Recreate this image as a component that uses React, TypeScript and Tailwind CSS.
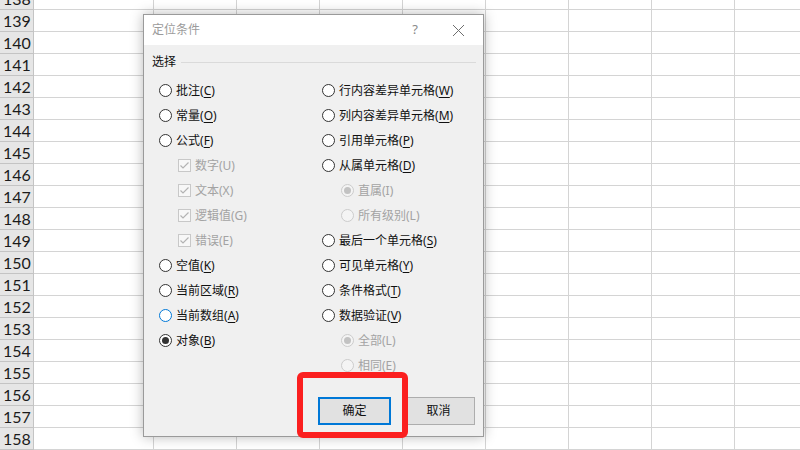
import React from "react";

type Item = {
  label: string;
  key?: string;
  kind: "radio" | "check" | "sub";
  checked?: boolean;
  disabled?: boolean;
  focus?: boolean;
};

const rows = Array.from({ length: 21 }, (_, i) => 138 + i);

const leftItems: Item[] = [
  { label: "批注", key: "C", kind: "radio" },
  { label: "常量", key: "O", kind: "radio" },
  { label: "公式", key: "F", kind: "radio" },
  { label: "数字(U)", kind: "check", checked: true, disabled: true },
  { label: "文本(X)", kind: "check", checked: true, disabled: true },
  { label: "逻辑值(G)", kind: "check", checked: true, disabled: true },
  { label: "错误(E)", kind: "check", checked: true, disabled: true },
  { label: "空值", key: "K", kind: "radio" },
  { label: "当前区域", key: "R", kind: "radio" },
  { label: "当前数组", key: "A", kind: "radio", focus: true },
  { label: "对象", key: "B", kind: "radio", checked: true },
];

const rightItems: Item[] = [
  { label: "行内容差异单元格", key: "W", kind: "radio" },
  { label: "列内容差异单元格", key: "M", kind: "radio" },
  { label: "引用单元格", key: "P", kind: "radio" },
  { label: "从属单元格", key: "D", kind: "radio" },
  { label: "直属(I)", kind: "sub", checked: true, disabled: true },
  { label: "所有级别(L)", kind: "sub", disabled: true },
  { label: "最后一个单元格", key: "S", kind: "radio" },
  { label: "可见单元格", key: "Y", kind: "radio" },
  { label: "条件格式", key: "T", kind: "radio" },
  { label: "数据验证", key: "V", kind: "radio" },
  { label: "全部(L)", kind: "sub", checked: true, disabled: true },
  { label: "相同(E)", kind: "sub", disabled: true },
];

function Radio({ checked, disabled, focus }: { checked?: boolean; disabled?: boolean; focus?: boolean }) {
  const border = disabled ? "border-[#cccccc] bg-[#f4f4f4]" : focus ? "border-[#0078d7] bg-white" : "border-[#333333] bg-white";
  return (
    <div className={`flex h-[13px] w-[13px] shrink-0 items-center justify-center rounded-full border ${border}`}>
      {checked && (
        <div className={`h-[7px] w-[7px] rounded-full ${disabled ? "bg-[#c2c2c2]" : "bg-[#333333]"}`} />
      )}
    </div>
  );
}

function Check() {
  return (
    <div className="flex h-[13px] w-[13px] shrink-0 items-center justify-center border border-[#c8c8c8] bg-[#f7f7f7]">
      <svg width="11" height="11" viewBox="0 0 11 11">
        <polyline points="1.5,5.5 4,8 9.5,2.5" fill="none" stroke="#b3b3b3" strokeWidth="1.2" />
      </svg>
    </div>
  );
}

function Option({ item }: { item: Item }) {
  const text = item.disabled ? "text-[#a3a3a3]" : "text-[#111111]";
  return (
    <div className={`flex h-[25px] items-center ${item.kind === "radio" ? "" : "pl-[19px]"}`}>
      {item.kind === "check" ? (
        <Check />
      ) : (
        <Radio checked={item.checked} disabled={item.disabled} focus={item.focus} />
      )}
      <span className={`ml-[4px] whitespace-nowrap text-[12px] leading-none ${text}`}>
        {item.label}
        {item.key && (
          <>
            (<span className="underline underline-offset-2">{item.key}</span>)
          </>
        )}
      </span>
    </div>
  );
}

export default function App() {
  return (
    <div className="relative h-[450px] w-[800px] overflow-hidden bg-white">
      {/* Sheet grid */}
      <div className="-mt-[12px]">
        {rows.map((n) => (
          <div key={n} className="flex h-[22px]">
            <div className="flex w-[34px] shrink-0 items-center border-b border-r border-[#c4c4c4] bg-[#e6e6e6] pl-[3px] text-[16px] text-[#1b1b1b] [font-family:Lato,'Liberation_Sans',sans-serif]">
              {n}
            </div>
            <div className="w-[120px] shrink-0 border-b border-r border-[#d4d4d4]" />
            <div className="w-[83px] shrink-0 border-b border-r border-[#d4d4d4]" />
            <div className="w-[83px] shrink-0 border-b border-r border-[#d4d4d4]" />
            <div className="w-[83px] shrink-0 border-b border-r border-[#d4d4d4]" />
            <div className="w-[83px] shrink-0 border-b border-r border-[#d4d4d4]" />
            <div className="w-[83px] shrink-0 border-b border-r border-[#d4d4d4]" />
            <div className="w-[83px] shrink-0 border-b border-r border-[#d4d4d4]" />
            <div className="w-[83px] shrink-0 border-b border-r border-[#d4d4d4]" />
            <div className="w-[83px] shrink-0 border-b border-r border-[#d4d4d4]" />
          </div>
        ))}
      </div>

      {/* Go To Special dialog */}
      <div className="absolute left-[143px] top-[14px] flex h-[423px] w-[341px] flex-col border border-[#9a9a9a] bg-[#f0f0f0] shadow-[0_0_12px_rgba(0,0,0,0.28)] [font-family:'Noto_Sans','Noto_Sans_CJK_SC',sans-serif]">
        {/* Title bar */}
        <div className="flex h-[30px] items-center bg-white pl-[8px] pr-[18px]">
          <span className="text-[12px] text-[#9b9b9b]">定位条件</span>
          <span className="ml-auto text-[13px] text-[#8a8a8a]">?</span>
          <svg className="ml-[34px]" width="13" height="13" viewBox="0 0 13 13">
            <path d="M1 1 L12 12 M12 1 L1 12" stroke="#6e6e6e" strokeWidth="1" />
          </svg>
        </div>

        {/* Body */}
        <div className="flex flex-1 flex-col pl-[8px] pr-[8px] pt-[9px]">
          <div className="flex h-[16px] items-center">
            <span className="text-[12px] text-[#111111]">选择</span>
            <div className="ml-[5px] mr-[-1px] h-px flex-1 bg-[#dadada]" />
          </div>

          <div className="mt-[8px] flex pl-[7px]">
            <div className="w-[163px]">
              {leftItems.map((it) => (
                <Option key={it.label} item={it} />
              ))}
            </div>
            <div className="flex-1">
              {rightItems.map((it) => (
                <Option key={it.label} item={it} />
              ))}
            </div>
          </div>

          <div className="mt-[19px] flex justify-end gap-[11px]">
            <button className="h-[28px] w-[73px] border-2 border-[#0078d7] bg-[#e1e1e1] text-[12px] text-[#111111]">
              确定
            </button>
            <button className="h-[28px] w-[73px] border border-[#adadad] bg-[#e1e1e1] text-[12px] text-[#111111]">
              取消
            </button>
          </div>
        </div>
      </div>

      {/* Red highlight */}
      <div className="absolute left-[297px] top-[372px] h-[66px] w-[111px] rounded-[6px] border-[6px] border-[#fb1f1f]" />
    </div>
  );
}
